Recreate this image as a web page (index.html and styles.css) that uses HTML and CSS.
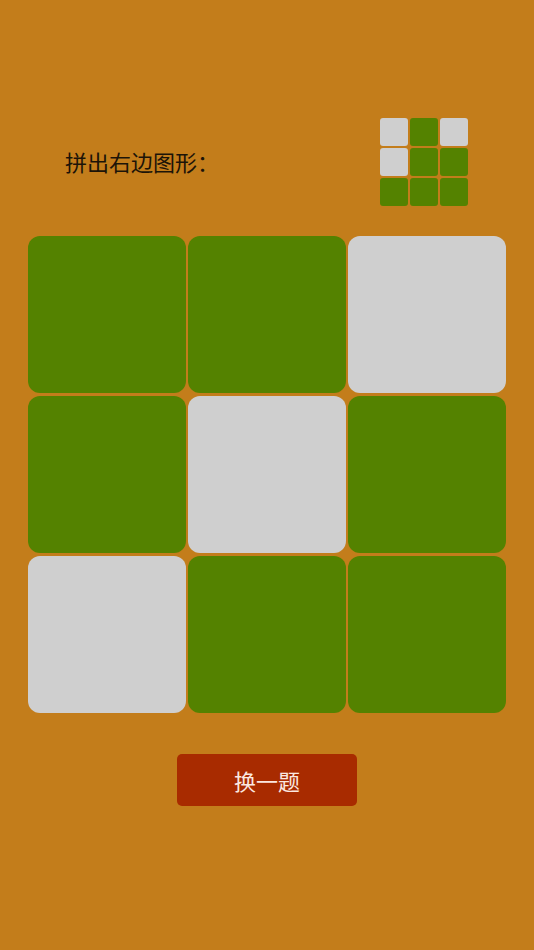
FILE: index.html
```html
<!DOCTYPE html>
<html lang="zh">
<head>
<meta charset="utf-8">
<title>拼图</title>
<link rel="stylesheet" href="styles.css">
</head>
<body>
<div class="page">
  <div class="header">
    <div class="prompt">拼出右边图形：</div>
    <div class="target">
      <div class="tcell off"></div><div class="tcell on"></div><div class="tcell off"></div>
      <div class="tcell off"></div><div class="tcell on"></div><div class="tcell on"></div>
      <div class="tcell on"></div><div class="tcell on"></div><div class="tcell on"></div>
    </div>
  </div>
  <div class="board">
    <div class="cell on"></div><div class="cell on"></div><div class="cell off"></div>
    <div class="cell on"></div><div class="cell off"></div><div class="cell on"></div>
    <div class="cell off"></div><div class="cell on"></div><div class="cell on"></div>
  </div>
  <div class="actions">
    <button class="btn">换一题</button>
  </div>
</div>
</body>
</html>
```

FILE: styles.css
```css
html, body {
  margin: 0;
  padding: 0;
  background: #c37d1b;
}
.page {
  width: 534px;
  height: 950px;
  font-family: "Noto Sans CJK SC", "Noto Sans", sans-serif;
}
.header {
  display: flex;
  align-items: center;
  justify-content: space-between;
  padding: 118px 66px 0 65px;
}
.prompt {
  font-size: 22px;
  color: #1c1408;
  line-height: 30px;
  margin-bottom: 3px;
}
.target {
  display: grid;
  grid-template-columns: repeat(3, 28px);
  grid-template-rows: repeat(3, 28px);
  gap: 2px;
}
.tcell {
  border-radius: 3px;
}
.on { background: #548200; }
.off { background: #cfcfcf; }
.board {
  display: grid;
  grid-template-columns: repeat(3, 158px);
  grid-template-rows: repeat(3, 157px);
  gap: 3px 2px;
  margin: 30px 0 0 28px;
}
.cell {
  border-radius: 12px;
}
.actions {
  display: flex;
  justify-content: center;
  margin-top: 41px;
}
.btn {
  width: 180px;
  height: 52px;
  border: none;
  border-radius: 5px;
  background: #a82b00;
  color: #fbe8e0;
  font-family: "Noto Sans CJK SC", "Noto Sans", sans-serif;
  font-size: 22px;
  padding: 0;
}
```
